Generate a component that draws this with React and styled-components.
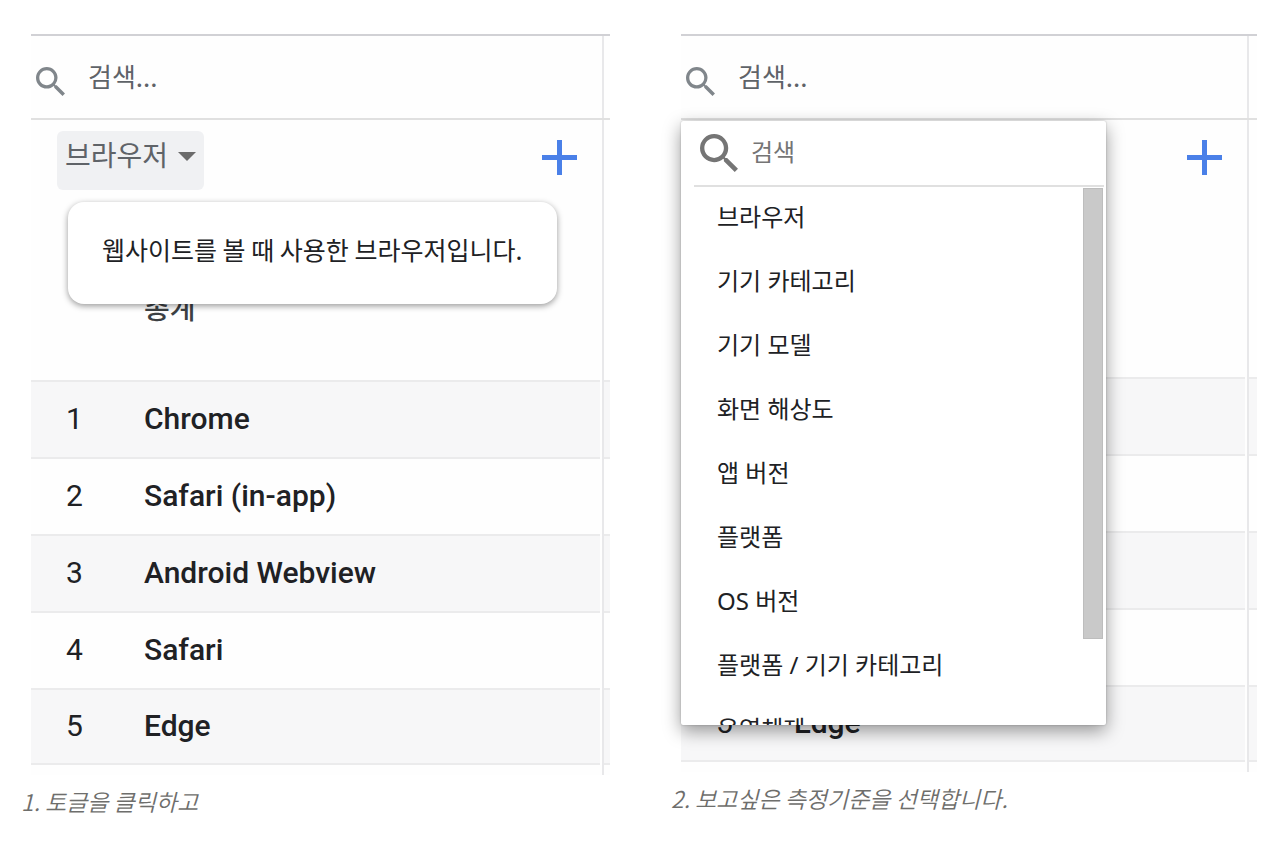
import React from "react";
import styled, { createGlobalStyle } from "styled-components";

const korean = `"Noto Sans CJK KR", sans-serif`;

const GlobalStyle = createGlobalStyle`
  *, *::before, *::after { box-sizing: border-box; }
  body {
    margin: 0;
    background: #fff;
    color: #202124;
    font-family: Roboto, "Noto Sans CJK KR", sans-serif;
  }
  button, input { font: inherit; color: inherit; border: 0; background: none; padding: 0; }
`;

const Page = styled.main`
  display: grid;
  grid-template-columns: 579fr 576fr;
  gap: 71px;
  padding: 34px 23px 32px 31px;
`;

const Figure = styled.figure`
  margin: 0;
  min-width: 0;
`;

const Panel = styled.section`
  position: relative;
  padding-bottom: 10px;
  background: #fefefe;

  &::after {
    content: "";
    position: absolute;
    top: 2px;
    bottom: 0;
    right: ${(p) => p.$inset}px;
    width: 4px;
    border-left: 2px solid #fefefe;
    border-right: 2px solid #e8e8ea;
  }
`;

const SearchBar = styled.label`
  position: relative;
  z-index: 1;
  display: flex;
  align-items: center;
  gap: 23px;
  height: 86px;
  padding: 8px 24px 0 5px;
  border-top: 2px solid #d1d1d5;
  border-bottom: 2px solid #e0e0e0;
  color: #80868b;
`;

const SearchInput = styled.input`
  flex: 1;
  min-width: 0;
  height: 40px;
  margin-bottom: ${(p) => p.$lift}px;
  outline: 0;
  font-family: ${korean};
  font-size: ${(p) => p.$size}px;
  line-height: 40px;

  &::placeholder { color: ${(p) => p.$tone}; opacity: 1; }
`;

const DimensionBar = styled.div`
  position: relative;
  display: flex;
  justify-content: space-between;
  align-items: flex-start;
  height: 130px;
  padding: 11px ${(p) => p.$inset + 27}px 0 26px;
`;

const DimensionButton = styled.button`
  display: flex;
  align-items: center;
  gap: 9px;
  height: 59px;
  padding: 0 7px 14px 8px;
  border-radius: 6px;
  background: #f0f1f3;
  color: #5f6368;
  font-family: ${korean};
  font-size: 28px;
  line-height: 40px;
`;

const AddButton = styled.button`
  margin-left: auto;
  padding-top: 9px;
  color: #4a80e8;
  line-height: 0;
`;

const ResizeHandle = styled.span`
  position: absolute;
  right: ${(p) => p.$inset + 2}px;
  bottom: -12px;
  width: 2px;
  height: 22px;
  background: #dcdcde;
`;

const Tooltip = styled.div`
  position: absolute;
  z-index: 2;
  top: 82px;
  left: 37px;
  padding: 28px 35px 35px 34px;
  border-radius: 16px;
  background: #fff;
  box-shadow: 0 2px 6px rgba(0, 0, 0, 0.4);
  font-family: ${korean};
  font-size: 25px;
  line-height: 39px;
  white-space: nowrap;
`;

const Table = styled.table`
  width: 100%;
  border-collapse: separate;
  border-spacing: 0;
  table-layout: fixed;
`;

const IndexCol = styled.col`
  width: 113px;
`;

const TotalRow = styled.tr`
  height: ${(p) => p.$height}px;

  th {
    padding: 37px 0 0;
    vertical-align: top;
    text-align: left;
    color: #3c4043;
    font-family: ${korean};
    font-size: 28px;
    font-weight: 500;
    line-height: 40px;
  }
`;

const Row = styled.tr`
  height: 77px;

  td, th {
    padding: 0 0 2px;
    border-top: 2px solid #ebebec;
    text-align: left;
    font-size: 30px;
    line-height: 36px;
  }
  td { padding-left: 35px; font-weight: 400; }
  th { font-weight: 500; }
  &:nth-child(even) { background: #f7f7f8; }
  &:last-child td, &:last-child th { border-bottom: 2px solid #ebebec; }
`;

const Caption = styled.figcaption`
  margin: 8px 0 0 -10px;
  color: #6e6e6c;
  font-family: ${korean};
  font-size: 23px;
  font-style: italic;
  font-weight: 350;
  line-height: 36px;
`;

const Menu = styled.div`
  position: absolute;
  z-index: 2;
  top: 87px;
  left: 0;
  width: 425px;
  height: 604px;
  display: flex;
  flex-direction: column;
  padding: 0 2px 0 13px;
  border-radius: 2px;
  background: #fff;
  box-shadow: 0 0 2px rgba(0, 0, 0, 0.25), 0 6px 18px rgba(0, 0, 0, 0.4);
`;

const MenuSearch = styled.label`
  display: flex;
  align-items: center;
  gap: 13px;
  flex: none;
  height: 66px;
  padding: 0 6px;
  border-bottom: 2px solid #e0e0e0;
  color: #757575;
`;

const MenuBody = styled.div`
  display: flex;
  flex: 1;
  min-height: 0;
  overflow: hidden;
`;

const MenuList = styled.ul`
  flex: 1;
  margin: 0;
  padding: 0;
  list-style: none;
`;

const MenuItem = styled.button`
  display: block;
  width: 100%;
  height: 64px;
  padding: 0 23px 5px;
  text-align: left;
  font-family: "Noto Sans", ${korean};
  font-size: 24px;
  line-height: 36px;
`;

const ScrollThumb = styled.div`
  width: 20px;
  height: 451px;
  margin: 1px 1px 0 0;
  border: 1px solid #bdbdbd;
  background: #c9c9c9;
`;

const SearchIcon = ({ size }) => (
  <svg width={size} height={size} viewBox="3 3 17.5 17.5" fill="currentColor" aria-hidden="true">
    <path d="M15.5 14h-.79l-.28-.27A6.47 6.47 0 0 0 16 9.5 6.5 6.5 0 1 0 9.5 16c1.61 0 3.09-.59 4.23-1.57l.27.28v.79l5 4.99L20.49 19l-4.99-5zm-6 0C7.01 14 5 11.99 5 9.5S7.01 5 9.5 5 14 7.01 14 9.5 11.99 14 9.5 14z" />
  </svg>
);

const PlusIcon = () => (
  <svg width="35" height="35" viewBox="0 0 35 35" fill="currentColor" aria-hidden="true">
    <path d="M15 0h5v15h15v5H20v15h-5V20H0v-5h15z" />
  </svg>
);

const CaretIcon = () => (
  <svg width="20" height="16" viewBox="0 0 20 16" fill="#6b6b6b" aria-hidden="true">
    <path d="M1 6h18l-9 9z" />
  </svg>
);

const browsers = ["Chrome", "Safari (in-app)", "Android Webview", "Safari", "Edge"];
const dimensions = [
  "브라우저",
  "기기 카테고리",
  "기기 모델",
  "화면 해상도",
  "앱 버전",
  "플랫폼",
  "OS 버전",
  "플랫폼 / 기기 카테고리",
  "운영체제",
];

function Report({ totalHeight, inset, trigger, children }) {
  return (
    <Panel $inset={inset}>
      <SearchBar>
        <SearchIcon size={29} />
        <SearchInput $size={26} $lift={10} $tone="#5f6368" type="text" placeholder="검색..." aria-label="검색" />
      </SearchBar>
      <DimensionBar $inset={inset}>
        {trigger}
        <AddButton type="button" aria-label="측정기준 추가">
          <PlusIcon />
        </AddButton>
        <ResizeHandle $inset={inset} />
      </DimensionBar>
      <Table>
        <colgroup>
          <IndexCol />
          <col />
        </colgroup>
        <tbody>
          <TotalRow $height={totalHeight}>
            <td />
            <th scope="row">총계</th>
          </TotalRow>
          {browsers.map((name, i) => (
            <Row key={name}>
              <td>{i + 1}</td>
              <th scope="row">{name}</th>
            </Row>
          ))}
        </tbody>
      </Table>
      {children}
    </Panel>
  );
}

export default function App() {
  return (
    <>
      <GlobalStyle />
      <Page>
        <Figure>
          <Report
            totalHeight={130}
            inset={6}
            trigger={
              <>
                <DimensionButton type="button" aria-haspopup="menu" aria-describedby="browser-tip">
                  브라우저
                  <CaretIcon />
                </DimensionButton>
                <Tooltip role="tooltip" id="browser-tip">
                  웹사이트를 볼 때 사용한 브라우저입니다.
                </Tooltip>
              </>
            }
          />
          <Caption>1. 토글을 클릭하고</Caption>
        </Figure>
        <Figure>
          <Report totalHeight={127} inset={8}>
            <Menu>
              <MenuSearch>
                <SearchIcon size={38} />
                <SearchInput $size={24} $lift={4} $tone="#757575" type="text" placeholder="검색" aria-label="측정기준 검색" />
              </MenuSearch>
              <MenuBody>
                <MenuList>
                  {dimensions.map((name) => (
                    <li key={name}>
                      <MenuItem type="button">{name}</MenuItem>
                    </li>
                  ))}
                </MenuList>
                <ScrollThumb />
              </MenuBody>
            </Menu>
          </Report>
          <Caption>2. 보고싶은 측정기준을 선택합니다.</Caption>
        </Figure>
      </Page>
    </>
  );
}
